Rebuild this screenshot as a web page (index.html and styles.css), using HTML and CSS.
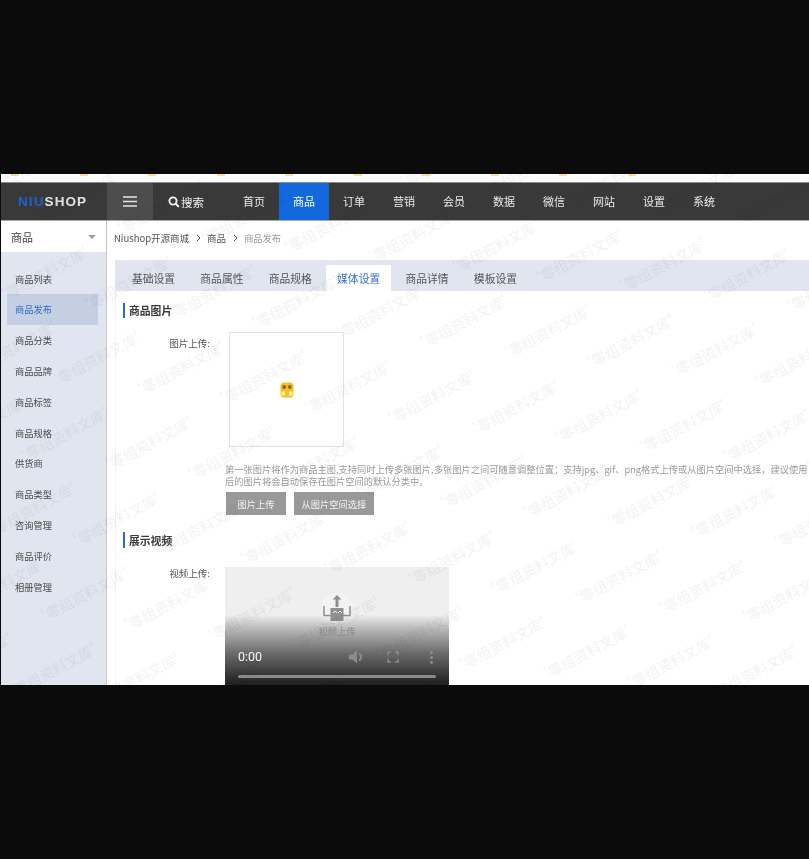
FILE: index.html
```html
<!DOCTYPE html>
<html lang="zh-CN">
<head>
<meta charset="utf-8">
<title>商品发布</title>
<link rel="stylesheet" href="styles.css">
</head>
<body>
<div class="app">
  <div class="strip"><i></i><i></i><i></i><i></i><i></i><i></i><i></i><i></i><i></i><i></i></div>
  <header class="topbar">
    <div class="logo"><b>NIU</b>SHOP</div>
    <div class="burger"><svg width="14" height="11" viewBox="0 0 14 11"><path d="M0 1h14M0 5.5h14M0 10h14" stroke="#e6e6e6" stroke-width="1.6"/></svg></div>
    <div class="search"><svg width="12" height="12" viewBox="0 0 12 12"><circle cx="5" cy="5" r="3.6" fill="none" stroke="#fff" stroke-width="1.8"/><path d="M7.6 7.6l3.2 3.2" stroke="#fff" stroke-width="2"/></svg><span>搜索</span></div>
    <nav class="nav">
      <a>首页</a><a class="on">商品</a><a>订单</a><a>营销</a><a>会员</a><a>数据</a><a>微信</a><a>网站</a><a>设置</a><a>系统</a>
    </nav>
  </header>
  <div class="body">
    <aside class="side">
      <div class="side-head"><span>商品</span><i class="caret"></i></div>
      <ul class="menu">
        <li>商品列表</li><li class="on">商品发布</li><li>商品分类</li><li>商品品牌</li><li>商品标签</li><li>商品规格</li><li>供货商</li><li>商品类型</li><li>咨询管理</li><li>商品评价</li><li>相册管理</li>
      </ul>
    </aside>
    <main class="main">
      <div class="crumbs"><span>Niushop开源商城</span><svg class="sep" width="5" height="8" viewBox="0 0 5 8"><path d="M1 1l3 3-3 3" fill="none" stroke="#555"/></svg><span>商品</span><svg class="sep" width="5" height="8" viewBox="0 0 5 8"><path d="M1 1l3 3-3 3" fill="none" stroke="#555"/></svg><span class="muted">商品发布</span></div>
      <div class="tabs"><a>基础设置</a><a>商品属性</a><a>商品规格</a><a class="on">媒体设置</a><a>商品详情</a><a>模板设置</a></div>
      <section class="panel">
        <h3 class="title">商品图片</h3>
        <div class="row first">
          <label>图片上传:</label>
          <div class="field">
            <div class="picbox">
              <svg width="14" height="16" viewBox="0 0 14 16"><rect x="0.5" y="0.5" width="13" height="15" rx="3.5" fill="#f2c020"/><circle cx="4.2" cy="5" r="2" fill="#8a6a20"/><circle cx="9.8" cy="5" r="2" fill="#8a6a20"/><rect x="1.5" y="9.5" width="3.5" height="4" fill="#fff2b0"/><rect x="9" y="9.5" width="3.5" height="4" fill="#fff2b0"/></svg>
            </div>
            <p class="hint">第一张图片将作为商品主图,支持同时上传多张图片,多张图片之间可随意调整位置；支持jpg、gif、png格式上传或从图片空间中选择，建议使用<br>后的图片将会自动保存在图片空间的默认分类中。</p>
            <div class="btns"><button>图片上传</button><button>从图片空间选择</button></div>
          </div>
        </div>
        <h3 class="title second">展示视频</h3>
        <div class="row video-row">
          <label>视频上传:</label>
          <div class="video">
            <div class="up">
              <svg width="32" height="30" viewBox="0 0 32 30"><circle cx="16" cy="17" r="17" fill="#fff" fill-opacity=".25"/><path d="M16 2l-4.5 4.5h3V14h3V6.500h3z" fill="#8f8f8f"/><path d="M3 13v9.500h26V13" fill="none" stroke="#8f8f8f" stroke-width="1.500"/><rect x="9.500" y="15" width="13" height="13" fill="#8f8f8f"/><path d="M12 20l2-2 2 2M17 20l2-2 2 2" fill="none" stroke="#eee"/></svg>
              <span>视频上传</span>
            </div>
            <div class="ctrl">
              <span class="time">0:00</span>
              <svg class="ic-vol" width="15" height="14" viewBox="0 0 15 14"><path d="M0 4.500h3.500L8 .5v13l-4.500-4H0z" fill="#8c8c8c"/><path d="M10 3.500a4 4 0 0 1 0 7" fill="none" stroke="#8c8c8c" stroke-width="2"/></svg>
              <svg class="ic-full" width="12" height="12" viewBox="0 0 12 12"><path d="M1 4V1h3M8 1h3v3M11 8v3H8M4 11H1V8" fill="none" stroke="#8c8c8c" stroke-width="1.600"/></svg>
              <svg class="ic-more" width="3" height="13" viewBox="0 0 3 13"><circle cx="1.500" cy="1.500" r="1.500" fill="#8c8c8c"/><circle cx="1.500" cy="6.500" r="1.500" fill="#8c8c8c"/><circle cx="1.500" cy="11.500" r="1.500" fill="#8c8c8c"/></svg>
            </div>
            <div class="bar"></div>
          </div>
        </div>
      </section>
    </main>
  </div>
  <div class="marks" id="marks"></div>
</div>
<script src="script.js"></script>
</body>
</html>
```
FILE: styles.css
```css
* { box-sizing: border-box; }
html, body { margin: 0; height: 100%; }
body {
  background: #0b0b0b;
  overflow: hidden;
  padding: 174px 0 0 1px;
  font-family: "Noto Sans CJK SC", "Liberation Sans", sans-serif;
  color: #444;
}
.app {
  position: relative;
  height: 511px;
  background: #fff;
  overflow: hidden;
  filter: blur(.45px);
}
.strip { height: 8px; display: flex; gap: 60.5px; padding-left: 10px; }
.strip i { width: 8px; height: 1.5px; background: #f6e09a; }
.topbar {
  height: 39px;
  display: flex;
  background: #393939;
  border-top: 1px solid #8e8e8e;
  border-bottom: 1px solid #aaa;
  color: #e8e8e8;
}
.logo {
  width: 106px;
  padding-left: 17px;
  font: 700 13.5px/37px "Liberation Sans", sans-serif;
  letter-spacing: 1.1px;
  color: #e4e4e4;
}
.logo b { color: #1b63cf; font-weight: 700; }
.burger {
  width: 46px;
  background: #4d4d4d;
  display: flex;
  align-items: center;
  justify-content: center;
}
.search {
  width: 76px;
  padding-left: 15px;
  display: flex;
  align-items: center;
  gap: 1px;
  font-size: 11.5px;
  color: #f0f0f0;
}
.nav { display: flex; }
.nav a {
  width: 50px;
  text-align: center;
  font-size: 11px;
  line-height: 37px;
}
.nav a.on { background: #1268dc; color: #fff; }
.body { display: flex; height: 464px; }
.side {
  width: 106px;
  flex: none;
  background: #e0e5f0;
  border-right: 1px solid #c3c6cc;
}
.side-head {
  height: 31px;
  background: #fff;
  padding: 0 10px;
  display: flex;
  align-items: center;
  justify-content: space-between;
  font-size: 11px;
  color: #444;
}
.caret {
  width: 0;
  height: 0;
  border: 4px solid transparent;
  border-top: 4px solid #999;
  border-bottom: 0;
}
.menu {
  list-style: none;
  margin: 0;
  padding: 11.600px 8px 0 6px;
  font-size: 9.250px;
  color: #4a4a4a;
}
.menu li { height: 30.800px; line-height: 30.800px; padding-left: 8px; }
.menu li.on { background: #c5cfe3; color: #2f6cc4; }
.main { flex: 1; min-width: 0; padding-left: 8px; }
.crumbs {
  height: 39px;
  padding-bottom: 6px;
  margin-left: -1px;
  display: flex;
  align-items: center;
  font-size: 9.500px;
  color: #555;
}
.crumbs .sep { margin: 0 6px 0 7px; }
.crumbs .muted { color: #999; font-size: 9.250px; }
.tabs {
  height: 31px;
  background: #e0e5f0;
  display: flex;
  align-items: flex-end;
  gap: 3.400px;
  padding-left: 6px;
}
.tabs a {
  width: 65px;
  height: 26px;
  text-align: center;
  font-size: 10.800px;
  line-height: 26px;
  color: #555;
}
.tabs a.on { background: #fff; color: #2f72d0; }
.panel {
  height: 394px;
  border-left: 1px solid #f0f2f6;
  padding-top: 12px;
}
.title {
  margin: 0 0 0 7px;
  height: 15px;
  border-left: 2px solid #2a6bc8;
  padding-left: 4px;
  font-size: 10.800px;
  line-height: 15px;
  font-weight: 700;
  color: #3a3a3a;
}
.title.second { margin-top: 17px; height: 16px; line-height: 16px; }
.row { display: flex; }
.row.first { margin-top: 14px; }
.row.video-row { margin-top: 19px; }
.row label {
  width: 94px;
  flex: none;
  margin-right: 15px;
  padding-top: 5px;
  text-align: right;
  font-size: 9.500px;
  line-height: 12px;
  color: #555;
}
.row.video-row label { padding-top: 0; }
.field { min-width: 0; }
.picbox {
  width: 115px;
  height: 115px;
  margin-left: 4px;
  border: 1px solid #e2e2e2;
  display: flex;
  align-items: center;
  justify-content: center;
}
.hint {
  margin: 16px 0 0;
  white-space: nowrap;
  font-size: 9.250px;
  line-height: 12px;
  color: #999;
}
.btns { margin-top: 5px; margin-left: 1px; display: flex; gap: 8px; }
.btns button {
  height: 23px;
  padding: 0 7.600px;
  min-width: 60px;
  border: 0;
  background: #999;
  color: #f4f4f4;
  font: 9.250px "Noto Sans CJK SC", sans-serif;
}
.video {
  position: relative;
  width: 224px;
  height: 126px;
  background: linear-gradient(#efefef 0, #efefef 38%, #bdbdbd 48%, #6c6c6c 68%, #232323 92%, #111 100%);
  flex: none;
}
.up {
  display: flex;
  flex-direction: column;
  align-items: center;
  padding-top: 26px;
  font-size: 9.250px;
  line-height: 12px;
  color: #8a8a8a;
}
.up span { margin-top: 2px; }
.ctrl {
  position: absolute;
  left: 13px;
  top: 81px;
  width: 198px;
  height: 18px;
  display: flex;
  align-items: center;
}
.time { font: 12.500px/18px Roboto, sans-serif; color: #f4f4f4; width: 111px; }
.ic-full { margin-left: 23px; }
.ic-more { margin-left: 31px; }
.bar {
  position: absolute;
  left: 13px;
  top: 108px;
  width: 198px;
  height: 3px;
  background: #8a8a8a;
  border-radius: 2px;
}
.marks {
  position: absolute;
  inset: 0;
  pointer-events: none;
  mix-blend-mode: multiply;
}
.mark {
  position: absolute;
  width: 110px;
  margin: -10px 0 0 -55px;
  text-align: center;
  white-space: nowrap;
  font-size: 14.500px;
  line-height: 20px;
  color: #f2f2f2;
  transform: rotate(-28deg);
}
```
FILE: script.js
```js
// Tiled watermark: a lattice measured from the reference, in page coordinates.
var box = document.getElementById('marks');
for (var i = -8; i < 14; i++) {
  for (var j = -6; j < 8; j++) {
    var x = 97 + i * 83.7 - j * 32 - 1;
    var y = 358 + i * 9.7 + j * 75.5 - 174;
    if (x < -60 || x > 870 || y < -30 || y > 540) continue;
    var s = document.createElement('span');
    s.className = 'mark';
    s.textContent = "'零组资料文库'";
    s.style.left = x + 'px';
    s.style.top = y + 'px';
    box.appendChild(s);
  }
}
```
